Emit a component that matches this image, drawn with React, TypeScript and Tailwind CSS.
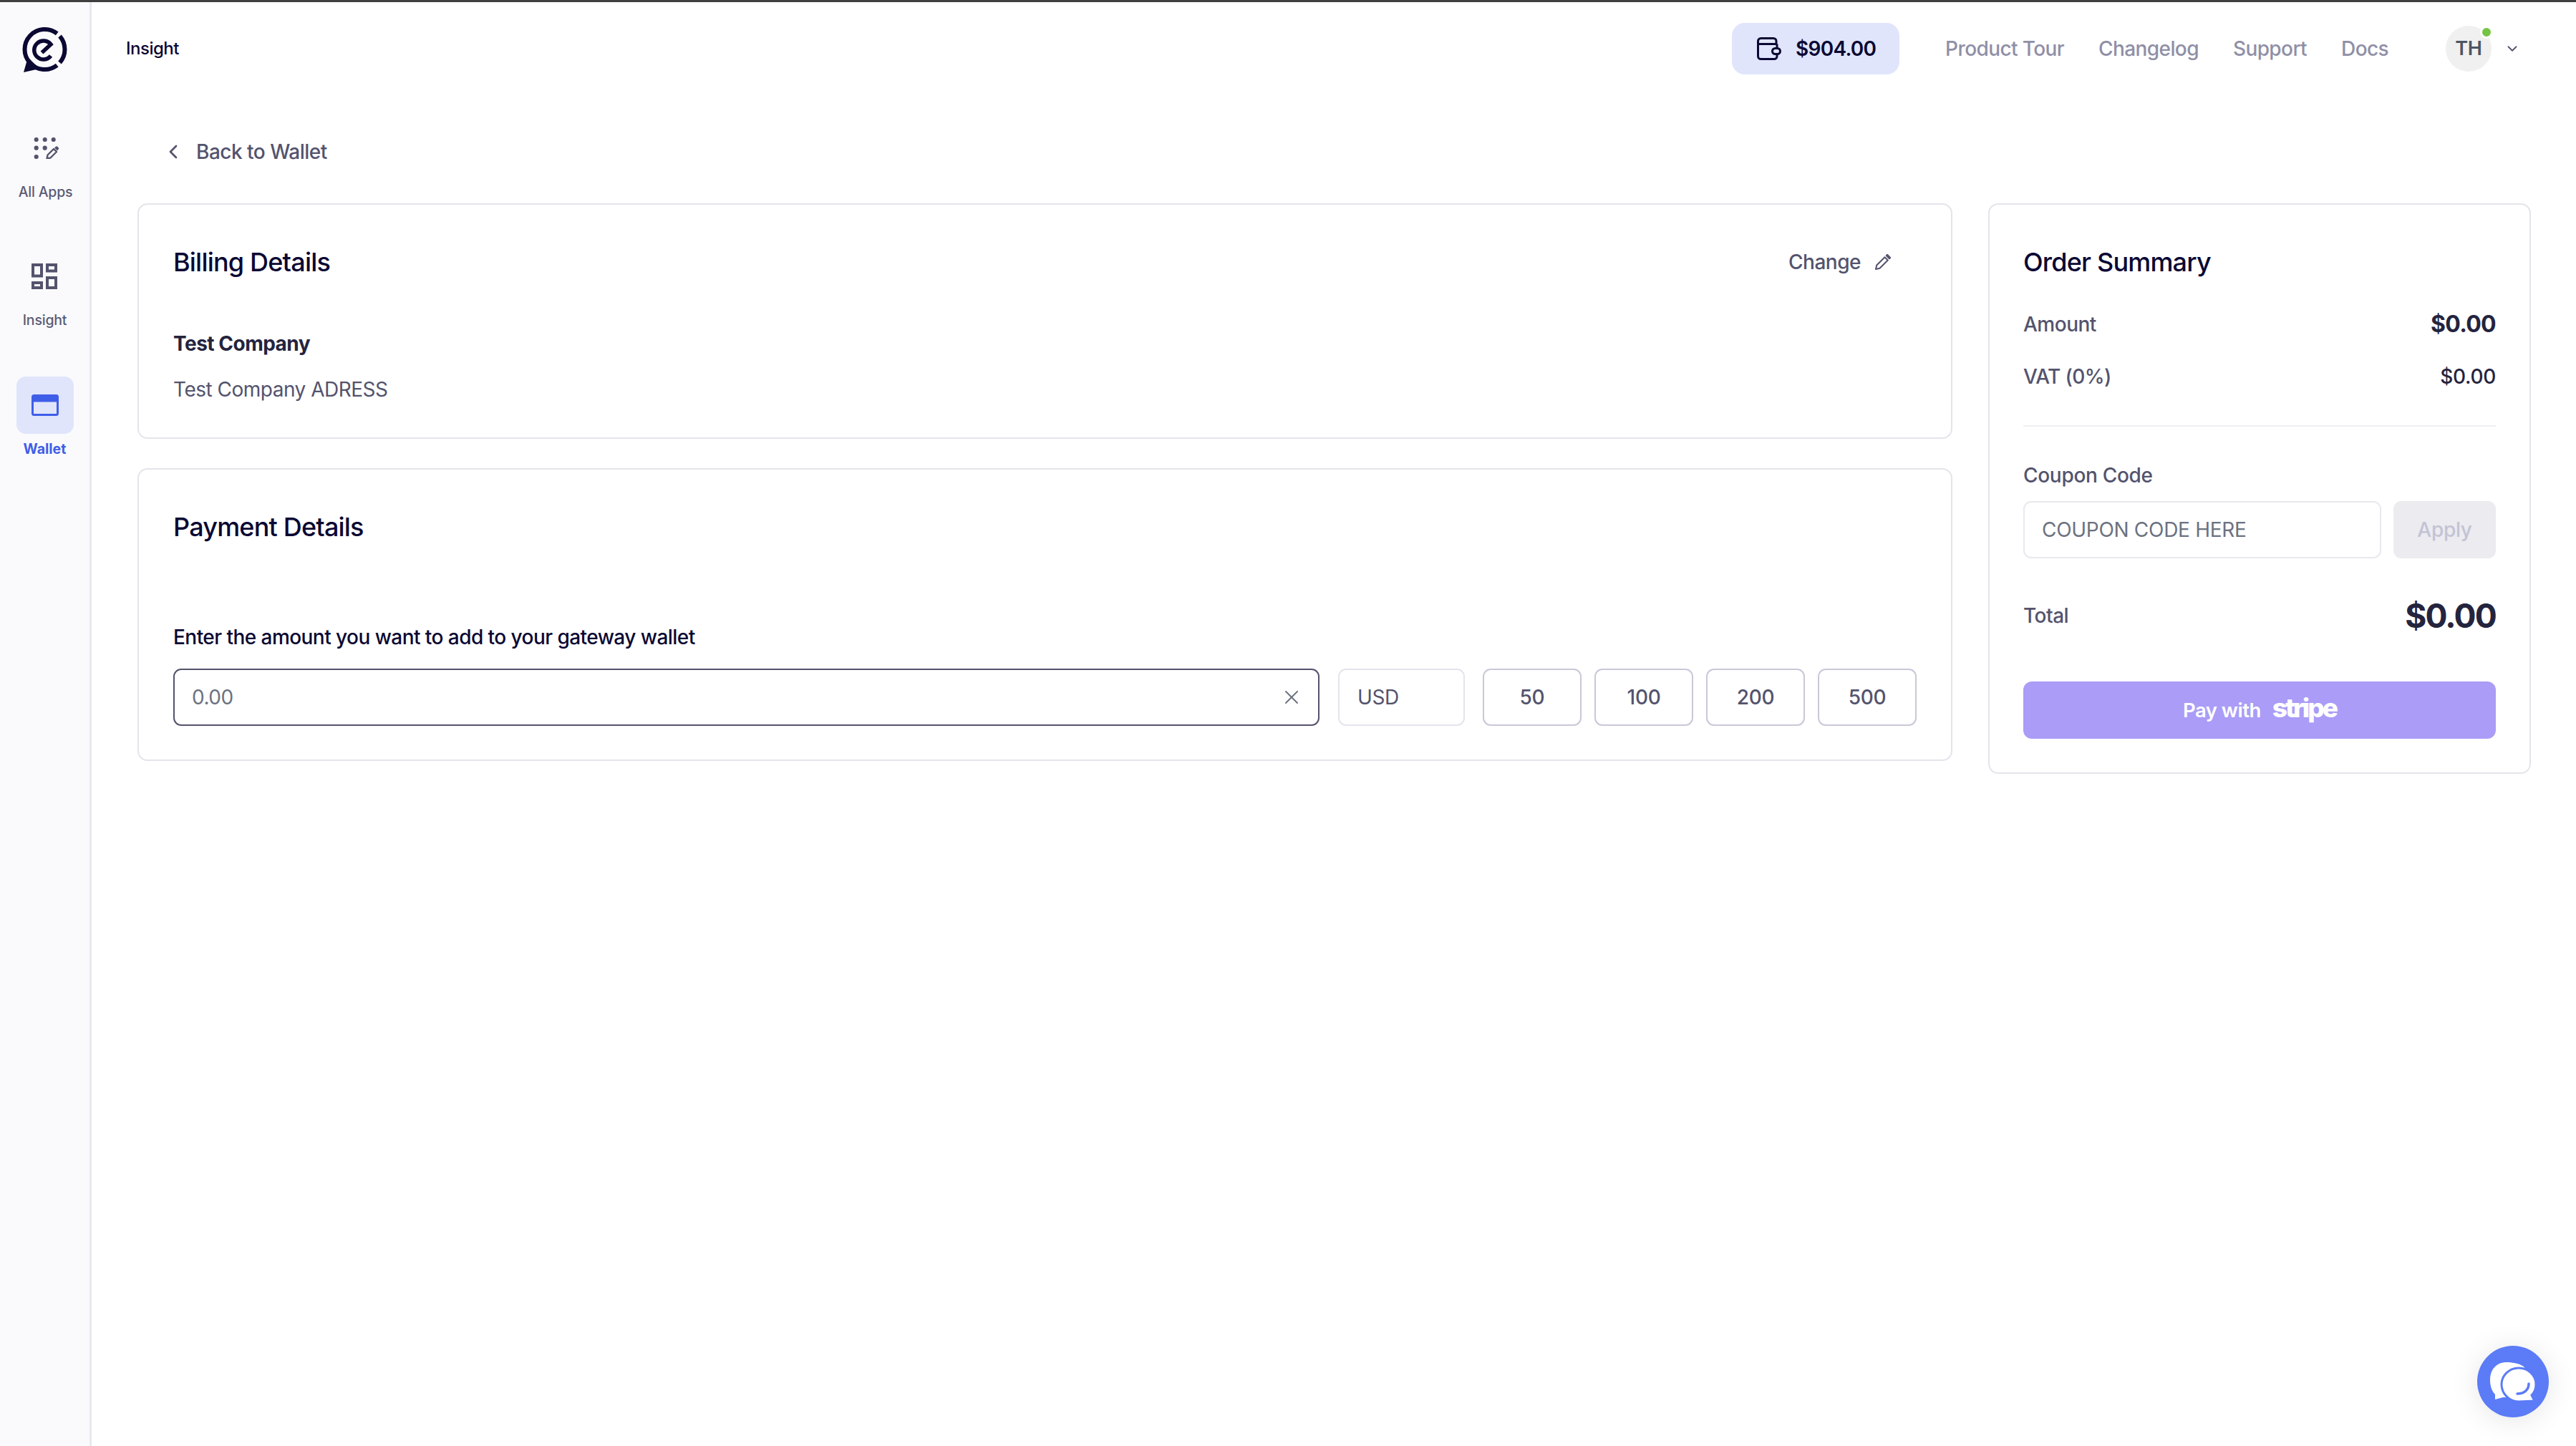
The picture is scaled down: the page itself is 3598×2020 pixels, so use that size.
import React from "react";
import { ChevronLeft, ChevronDown, X } from "lucide-react";

function Logo() {
  return (
    <svg width="64" height="64" viewBox="0 0 64 64" fill="none" stroke="#0b0833">
      <path d="M48.7 8.9 A28 28 0 1 0 48.7 53.1" strokeWidth="6" />
      <path d="M52.5 12.5 A28 28 0 0 1 52.5 49.5" strokeWidth="6" />
      <polygon points="2,63 8,42 24,58" fill="#0b0833" stroke="none" />
      <path d="M27.5 35.5 L40 24 A13 13 0 1 0 40 40" strokeWidth="5.5" />
    </svg>
  );
}

function AppsIcon() {
  return (
    <svg width="38" height="30" viewBox="0 0 38 30" fill="#53536d">
      <circle cx="5.7" cy="3" r="3.1" />
      <circle cx="17.7" cy="3" r="3.1" />
      <circle cx="29.7" cy="3" r="3.1" />
      <circle cx="5.7" cy="14.7" r="3.1" />
      <circle cx="17.7" cy="14.7" r="3.1" />
      <circle cx="5.7" cy="27" r="3.1" />
      <path d="M20.5 29.5 L21.5 24.5 L30 16 L34 20 L25.5 28.5 Z" fill="none" stroke="#53536d" strokeWidth="2.4" strokeLinejoin="round" />
      <path d="M31 14.5 L33 12.8 a1.5 1.5 0 0 1 2.2 0 l1.5 1.5 a1.5 1.5 0 0 1 0 2.2 L35 18.5 Z" />
    </svg>
  );
}

function InsightIcon() {
  return (
    <svg width="36" height="36" viewBox="0 0 36 36" fill="none" stroke="#53536d" strokeWidth="4">
      <rect x="2" y="2" width="12" height="15.5" />
      <rect x="22" y="2" width="12" height="8.5" />
      <rect x="2" y="27" width="12" height="7" />
      <rect x="22" y="20" width="12" height="14" />
    </svg>
  );
}

function CardIcon() {
  return (
    <svg width="38" height="30" viewBox="0 0 38 30" fill="none">
      <rect x="1.5" y="1.5" width="35" height="27" rx="2" stroke="#3f5ee8" strokeWidth="3" />
      <rect x="1.5" y="1.5" width="35" height="9" fill="#3f5ee8" />
    </svg>
  );
}

function WalletIcon() {
  return (
    <svg width="34" height="32" viewBox="0 0 34 32" fill="none" stroke="#0b0833" strokeWidth="3" strokeLinejoin="round">
      <path d="M28 15.5 V9.5 M28 24 V26.5 a4 4 0 0 1 -4 4 H5.5 a4 4 0 0 1 -4 -4 V5.5 a4 4 0 0 1 4 -4 H23 a4 4 0 0 1 4 4 V9.5 H1.5" />
      <rect x="21.5" y="15.5" width="11" height="8" rx="4" fill="#e0e5fb" />
    </svg>
  );
}

function PencilIcon() {
  return (
    <svg width="22" height="22" viewBox="0 0 22 22" fill="none" stroke="#53536d" strokeWidth="2" strokeLinejoin="round">
      <path d="M1 21 L2.2 15.5 L13.5 4.2 L17.8 8.5 L6.5 19.8 Z" />
      <path d="M15.8 2 L17 0.8 L21.2 5 L20 6.2 Z" fill="#53536d" />
    </svg>
  );
}

function ChatIcon() {
  return (
    <svg width="100" height="100" viewBox="0 0 100 100">
      <path d="M41 23 C27 23 18 33 18 48 C18 57 21 64 25 68 L25 75 L36 72 L50 72 L66 30 C60 25 51 23 41 23 Z" fill="#fff" />
      <path d="M58 31 C45 31 34 41 34 54 C34 67 45 78 58 78 L80 77 L76 69 C80 65 82 60 82 54 C82 41 71 31 58 31 Z" fill="#fff" stroke="#5b7bf7" strokeWidth="3" />
      <path d="M56 67 C65 67 72 62 72 53" fill="none" stroke="#5b7bf7" strokeWidth="3.5" strokeLinecap="round" />
    </svg>
  );
}

function NavItem({ icon, label, gap }: { icon: React.ReactNode; label: string; gap: string }) {
  return (
    <div className={`flex flex-col items-center ${gap}`}>
      {icon}
      <span className="text-[19.5px] leading-[24px] font-medium tracking-[-0.2px] text-[#5b5b73]">{label}</span>
    </div>
  );
}

export default function App() {
  const amounts = ["50", "100", "200", "500"];
  return (
    <div className="flex flex-col h-[2020px] w-full bg-white font-[Inter,sans-serif] overflow-hidden">
      <div className="h-[3px] bg-[#3f3f3f] shrink-0" />
      <div className="flex flex-1 min-h-0">
        <aside className="w-[128px] shrink-0 border-r-[3px] border-[#e8e8ef] bg-[#fafafd] flex flex-col items-center pt-[35px]">
          <Logo />
          <div className="mt-[90px] ml-[2px]">
            <NavItem icon={<AppsIcon />} label="All Apps" gap="gap-[34px]" />
          </div>
          <div className="mt-[88px]">
            <NavItem icon={<InsightIcon />} label="Insight" gap="gap-[31px]" />
          </div>
          <div className="mt-[67px] flex flex-col items-center gap-[9px]">
            <div className="w-[80px] h-[80px] rounded-[13px] bg-[#e0e5fb] flex items-center justify-center">
              <CardIcon />
            </div>
            <span className="text-[19.5px] leading-[24px] font-bold text-[#3f5ee8]">Wallet</span>
          </div>
        </aside>

        <main className="flex-1 min-w-0 flex flex-col">
          <header className="h-[130px] flex items-center pl-[48px] pr-[78px] shrink-0">
            <span className="text-[24px] font-medium tracking-[-0.5px] text-[#0b0833]">Insight</span>
            <div className="ml-auto flex items-center">
              <div className="w-[234px] h-[72px] rounded-[18px] bg-[#e0e5fb] flex items-center pl-[35px] gap-[20px]">
                <WalletIcon />
                <span className="text-[28px] font-semibold tracking-[-0.75px] text-[#0b0833]">$904.00</span>
              </div>
              <nav className="ml-[64px] flex items-center gap-[48px] text-[28px] font-medium tracking-[-0.6px] text-[#8f8fa6]">
                <span>Product Tour</span>
                <span>Changelog</span>
                <span>Support</span>
                <span>Docs</span>
              </nav>
              <div className="relative ml-[80px] w-[64px] h-[64px] rounded-full bg-[#f0f0f0] flex items-center justify-center">
                <span className="text-[27px] font-semibold tracking-[-0.3px] text-[#4b5563]">TH</span>
                <span className="absolute top-0 right-[-2px] w-[18px] h-[18px] rounded-full bg-[#76c442] border-[3px] border-white" />
              </div>
              <ChevronDown size={22} strokeWidth={2} className="ml-[18px] text-[#53536d]" />
            </div>
          </header>

          <div className="h-[151px] shrink-0 flex items-start pl-[98px] pt-[59px]">
            <div className="h-[40px] flex items-center gap-[16px]">
              <ChevronLeft size={32} strokeWidth={2} className="text-[#53536d]" />
              <span className="text-[28px] font-medium tracking-[-0.5px] text-[#53536d]">Back to Wallet</span>
            </div>
          </div>

          <div className="flex items-start gap-[50px] pl-[64px] pr-[63px]">
            <div className="flex-1 min-w-0 flex flex-col gap-[41px]">
              <section className="border-2 border-[#e4e4ec] rounded-[14px] px-[48px] pt-[58px] pb-[47px]">
                <div className="flex items-center justify-between h-[44px]">
                  <h2 className="text-[36px] font-[550] tracking-[-0.8px] text-[#0b0833]">Billing Details</h2>
                  <div className="flex items-center gap-[20px] mr-[36px]">
                    <span className="text-[28px] font-medium tracking-[-0.5px] text-[#53536d]">Change</span>
                    <PencilIcon />
                  </div>
                </div>
                <p className="mt-[72px] h-[40px] leading-[40px] text-[28px] font-bold tracking-[-0.5px] text-[#24243e]">Test Company</p>
                <p className="mt-[24px] h-[40px] leading-[40px] text-[28px] tracking-[-0.5px] text-[#53536d]">Test Company ADRESS</p>
              </section>

              <section className="border-2 border-[#e4e4ec] rounded-[14px] px-[48px] pt-[58px] pb-[47px]">
                <h2 className="h-[44px] leading-[44px] text-[36px] font-[550] tracking-[-0.8px] text-[#0b0833]">Payment Details</h2>
                <p className="mt-[112px] h-[40px] leading-[40px] text-[28px] font-medium tracking-[-0.55px] text-[#0b0833]">Enter the amount you want to add to your gateway wallet</p>
                <div className="mt-[24px] flex items-center">
                  <div className="flex-1 min-w-0 h-[80px] border-2 border-[#53536d] rounded-[11px] flex items-center pl-[24px] pr-[21px]">
                    <input
                      placeholder="0.00"
                      className="flex-1 min-w-0 bg-transparent outline-none text-[28px] tracking-[-0.5px] text-[#53536d] placeholder:text-[#6b7280]"
                    />
                    <X size={32} strokeWidth={1.5} className="text-[#6b7280]" />
                  </div>
                  <div className="ml-[26px] w-[177px] h-[80px] border-2 border-[#e4e4ec] rounded-[11px] flex items-center pl-[25px] text-[28px] tracking-[-0.4px] text-[#53536d]">USD</div>
                  <div className="ml-[25px] flex items-center gap-[18px]">
                    {amounts.map((a) => (
                      <button key={a} className="w-[138px] h-[80px] border-2 border-[#c8c8d8] rounded-[11px] flex items-center justify-center text-[28px] font-medium tracking-[-0.3px] text-[#53536d]">{a}</button>
                    ))}
                  </div>
                </div>
              </section>
            </div>

            <section className="w-[758px] shrink-0 border-2 border-[#e4e4ec] rounded-[14px] px-[47px] pt-[58px] pb-[47px]">
              <h2 className="h-[44px] leading-[44px] text-[36px] font-[550] tracking-[-0.8px] text-[#0b0833]">Order Summary</h2>
              <div className="mt-[45px] h-[40px] flex items-center justify-between">
                <span className="text-[28px] font-medium tracking-[-0.5px] text-[#53536d]">Amount</span>
                <span className="text-[32px] font-bold tracking-[-0.7px] text-[#24243e]">$0.00</span>
              </div>
              <div className="mt-[33px] h-[40px] flex items-center justify-between">
                <span className="text-[28px] font-medium tracking-[-0.6px] text-[#53536d]">VAT (0%)</span>
                <span className="text-[28px] font-medium tracking-[-0.3px] text-[#24243e]">$0.00</span>
              </div>
              <div className="mt-[48px] h-[2px] bg-[#f0f0f4]" />
              <p className="mt-[48px] h-[40px] leading-[40px] text-[28px] font-medium tracking-[-0.3px] text-[#53536d]">Coupon Code</p>
              <div className="mt-[16px] flex gap-[17px]">
                <input
                  placeholder="COUPON CODE HERE"
                  className="flex-1 min-w-0 h-[80px] border-2 border-[#e8e8ef] rounded-[11px] pl-[24px] outline-none text-[28px] tracking-[-0.3px] text-[#53536d] placeholder:text-[#6b7280]"
                />
                <button className="w-[143px] h-[80px] rounded-[11px] bg-[#ebebf0] text-[28px] font-medium tracking-[-0.3px] text-[#c3c3d4]">Apply</button>
              </div>
              <div className="mt-[55px] h-[50px] flex items-center justify-between">
                <span className="text-[28px] font-medium tracking-[-0.5px] text-[#53536d]">Total</span>
                <span className="text-[46px] font-bold tracking-[-1.8px] text-[#24243e]">$0.00</span>
              </div>
              <button className="mt-[67px] w-full h-[80px] rounded-[12px] bg-[#aa9cf7] flex items-center justify-center text-white">
                <span className="flex items-baseline gap-[16px]">
                  <span className="text-[27.5px] font-semibold tracking-[-0.5px]">Pay with</span>
                  <span className="text-[37px] font-extrabold leading-none tracking-[-3px]">stripe</span>
                </span>
              </button>
            </section>
          </div>
        </main>
      </div>

      <div className="fixed right-[38px] bottom-[40px] w-[100px] h-[100px] rounded-full bg-[#5b7bf7] shadow-[0_4px_40px_rgba(0,0,0,0.1)] flex items-center justify-center">
        <ChatIcon />
      </div>
    </div>
  );
}
